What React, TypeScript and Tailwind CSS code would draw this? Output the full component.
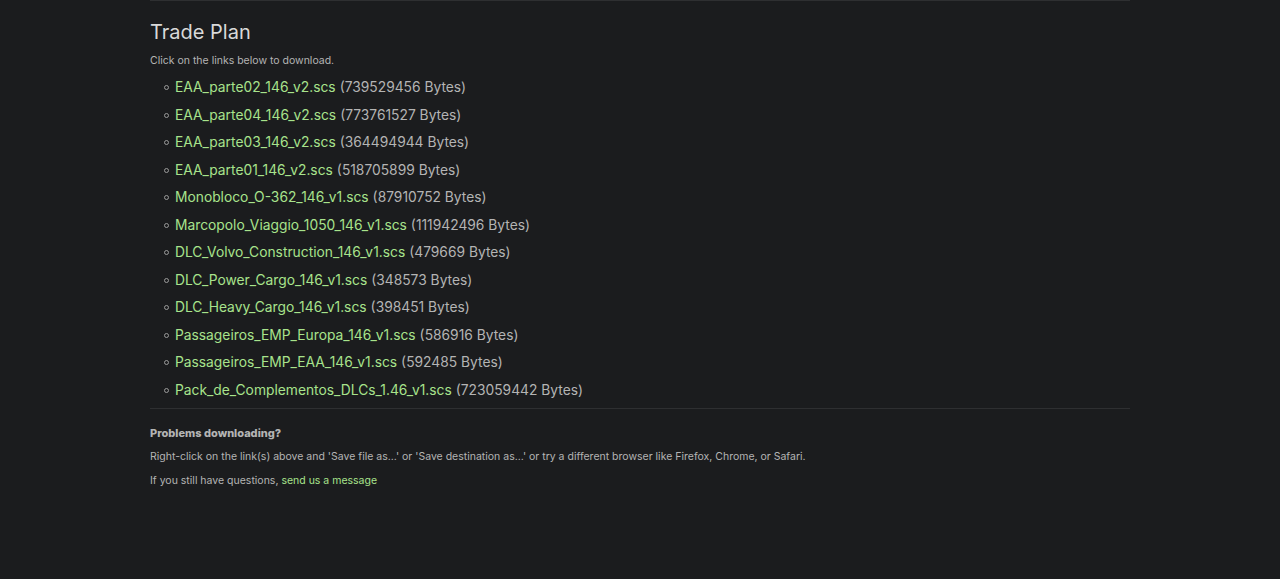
import React from "react"

const files = [
  { name: "EAA_parte02_146_v2.scs", size: 739529456 },
  { name: "EAA_parte04_146_v2.scs", size: 773761527 },
  { name: "EAA_parte03_146_v2.scs", size: 364494944 },
  { name: "EAA_parte01_146_v2.scs", size: 518705899 },
  { name: "Monobloco_O-362_146_v1.scs", size: 87910752 },
  { name: "Marcopolo_Viaggio_1050_146_v1.scs", size: 111942496 },
  { name: "DLC_Volvo_Construction_146_v1.scs", size: 479669 },
  { name: "DLC_Power_Cargo_146_v1.scs", size: 348573 },
  { name: "DLC_Heavy_Cargo_146_v1.scs", size: 398451 },
  { name: "Passageiros_EMP_Europa_146_v1.scs", size: 586916 },
  { name: "Passageiros_EMP_EAA_146_v1.scs", size: 592485 },
  { name: "Pack_de_Complementos_DLCs_1.46_v1.scs", size: 723059442 },
]

export default function App() {
  return (
    <div
      className="min-h-[579px] w-full bg-[#1b1c1e] text-[#b4b4b4]"
      style={{ fontFamily: "Inter, 'Open Sans', sans-serif" }}
    >
      <div className="mx-auto w-[980px] border-t border-[#2e2f31]">
        <h2 className="mt-[17px] text-[20px] leading-[28px] text-[#d9d9d9]">Trade Plan</h2>
        <p className="mt-[7px] text-[10.5px] leading-[16px]">Click on the links below to download.</p>

        <ul className="mt-[5px] pl-[25px]">
          {files.map((f) => (
            <li key={f.name} className="flex h-[27.5px] items-center text-[13.8px]">
              <span className="mr-[6px] -ml-[11px] inline-block h-[5px] w-[5px] rounded-full border border-[#9a9a9a]" />
              <a href="#" className="text-[#a8e38c]">
                {f.name}
              </a>
              <span className="ml-[4px]">({f.size} Bytes)</span>
            </li>
          ))}
        </ul>

        <div className="mt-[4px] border-t border-[#2e2f31] pt-[16px] text-[10.5px] leading-[16px]">
          <p className="text-[11px] font-extrabold">Problems downloading?</p>
          <p className="mt-[8px]">
            Right-click on the link(s) above and 'Save file as...' or 'Save destination as...' or try a different
            browser like Firefox, Chrome, or Safari.
          </p>
          <p className="mt-[8px]">
            If you still have questions,{" "}
            <a href="#" className="text-[#a8e38c]">
              send us a message
            </a>
          </p>
        </div>
      </div>
    </div>
  )
}
